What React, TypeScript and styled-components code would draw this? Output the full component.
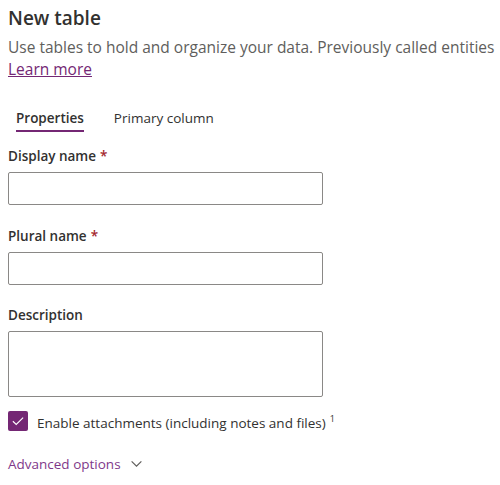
import styled, { createGlobalStyle } from 'styled-components';

const GlobalStyle = createGlobalStyle`
  html, body {
    margin: 0;
    padding: 0;
    background: #ffffff;
  }
  body {
    font-family: 'Open Sans', 'Noto Sans', 'Liberation Sans', sans-serif;
    color: #323130;
  }
`;

const Panel = styled.div`
  width: 500px;
  height: 485px;
  box-sizing: border-box;
  padding: 4px 8px 0 8px;
  display: flex;
  flex-direction: column;
`;

const Title = styled.h1`
  margin: 0;
  font-size: 19px;
  font-weight: 600;
  line-height: 28px;
  color: #323130;
`;

const Intro = styled.p`
  margin: 4px 0 0 0;
  font-size: 15.5px;
  line-height: 22px;
  color: #605e5c;
  white-space: nowrap;
`;

const LearnMore = styled.a`
  color: #742774;
  text-decoration: underline;
  cursor: pointer;
`;

const TabBar = styled.div`
  display: flex;
  gap: 30px;
  margin-top: 28px;
  padding-left: 8px;
`;

const Tab = styled.button<{ active: boolean }>`
  border: none;
  background: none;
  padding: 0 0 2px 0;
  font-family: inherit;
  font-size: 13.5px;
  line-height: 20px;
  font-weight: ${({ active }) => (active ? 600 : 400)};
  color: #323130;
  border-bottom: 2px solid ${({ active }) => (active ? '#742774' : 'transparent')};
  cursor: pointer;
`;

const Field = styled.div<{ top: number }>`
  display: flex;
  flex-direction: column;
  margin-top: ${({ top }) => top}px;
`;

const Label = styled.label`
  font-size: 13.5px;
  font-weight: 600;
  line-height: 20px;
  color: #323130;
  padding: 6px 0 4px 0;
`;

const Required = styled.span`
  color: #a4262c;
  margin-left: 4px;
`;

const TextInput = styled.input`
  width: 315px;
  height: 33px;
  box-sizing: border-box;
  border: 1px solid #8a8886;
  border-radius: 2px;
  margin-top: 2px;
`;

const TextArea = styled.textarea`
  width: 315px;
  height: 66px;
  box-sizing: border-box;
  border: 1px solid #8a8886;
  border-radius: 2px;
  margin-top: 2px;
  resize: none;
`;

const CheckRow = styled.label`
  display: flex;
  align-items: center;
  gap: 9px;
  margin-top: 12px;
  font-size: 13.5px;
  line-height: 20px;
  color: #323130;
`;

const Box = styled.span`
  width: 20px;
  height: 20px;
  border-radius: 2px;
  background: #742774;
  display: flex;
  align-items: center;
  justify-content: center;
`;

const Sup = styled.sup`
  font-size: 9px;
  margin-left: 4px;
`;

const Advanced = styled.button`
  display: flex;
  align-items: center;
  gap: 9px;
  border: none;
  background: none;
  padding: 0;
  margin-top: 21px;
  font-family: inherit;
  font-size: 13.5px;
  line-height: 20px;
  color: #80388a;
  cursor: pointer;
  align-self: flex-start;
`;

export default function App() {
  return (
    <>
      <GlobalStyle />
      <Panel>
        <Title>New table</Title>
        <Intro>
          Use tables to hold and organize your data. Previously called entities
          <br />
          <LearnMore>Learn more</LearnMore>
        </Intro>
        <TabBar>
          <Tab active>Properties</Tab>
          <Tab active={false}>Primary column</Tab>
        </TabBar>
        <Field top={8}>
          <Label>
            Display name<Required>*</Required>
          </Label>
          <TextInput />
        </Field>
        <Field top={15}>
          <Label>
            Plural name<Required>*</Required>
          </Label>
          <TextInput />
        </Field>
        <Field top={14}>
          <Label>Description</Label>
          <TextArea />
        </Field>
        <CheckRow>
          <Box>
            <svg width="14" height="14" viewBox="0 0 12 12" fill="none">
              <path d="M1.6 6.2 L4.5 9 L10.4 3.1" stroke="#ffffff" strokeWidth="0.95" />
            </svg>
          </Box>
          <span>
            Enable attachments (including notes and files)
            <Sup>1</Sup>
          </span>
        </CheckRow>
        <Advanced>
          Advanced options
          <svg width="13" height="13" viewBox="0 0 12 12" fill="none">
            <path d="M1.5 4 L6 8.5 L10.5 4" stroke="#605e5c" strokeWidth="1.1" />
          </svg>
        </Advanced>
      </Panel>
    </>
  );
}
